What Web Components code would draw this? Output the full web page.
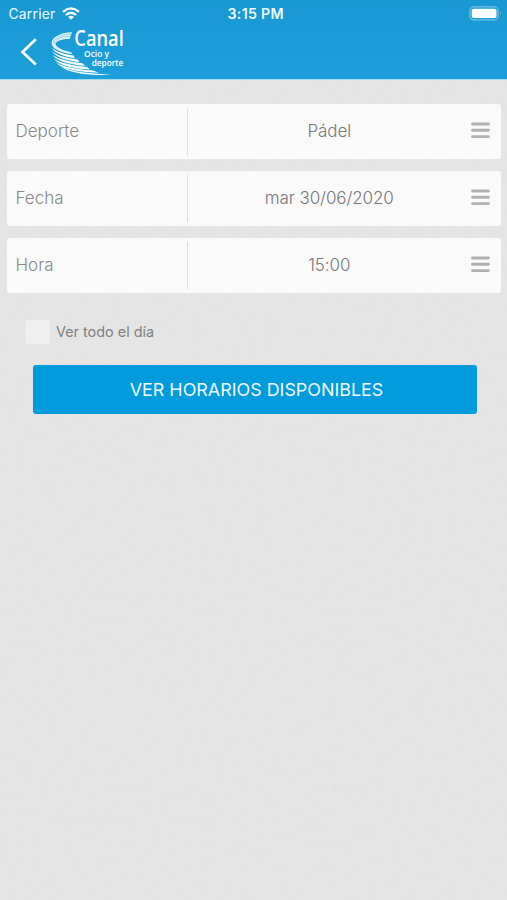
<!DOCTYPE html>
<html lang="es">
<head>
<meta charset="utf-8">
<meta name="viewport" content="width=device-width, initial-scale=1">
<title>Canal Ocio y deporte</title>
<style>
body {
    margin: 0;
    background: #e4e4e4;
    font-family: Inter, "Liberation Sans", sans-serif;
}
</style>
</head>
<body>
<canal-screen>
    <canal-header slot="header"></canal-header>
    <select-row label="Deporte">Pádel</select-row>
    <select-row label="Fecha">mar 30/06/2020</select-row>
    <select-row label="Hora">15:00</select-row>
    <check-option slot="actions">Ver todo el día</check-option>
    <primary-button slot="actions">VER HORARIOS DISPONIBLES</primary-button>
</canal-screen>

<script>
class CanalScreen extends HTMLElement {
    constructor() {
        super()
        this.attachShadow({ mode: "open" })
        this.shadowRoot.innerHTML = `
        <style>
        :host {
            position: relative;
            display: block;
            height: 900px;
            overflow: hidden;
            background: #e6e6e6;
        }
        .grain {
            position: absolute;
            inset: 0;
            width: 100%;
            height: 100%;
            opacity: 0.02;
        }
        .page {
            position: relative;
        }
        .rows {
            display: flex;
            flex-direction: column;
            gap: 12.4px;
            padding: 24px 6px 0 7px;
        }
        .actions {
            padding: 27.5px 30.5px 0 32.5px;
        }
        </style>
        <svg class="grain" aria-hidden="true">
            <filter id="paper">
                <feTurbulence type="fractalNoise" baseFrequency="0.12" numOctaves="3" seed="4"/>
                <feColorMatrix type="saturate" values="0"/>
                <feComponentTransfer><feFuncA type="linear" slope="0" intercept="1"/></feComponentTransfer>
            </filter>
            <rect width="100%" height="100%" filter="url(#paper)"/>
        </svg>
        <div class="page">
            <slot name="header"></slot>
            <div class="rows"><slot></slot></div>
            <div class="actions"><slot name="actions"></slot></div>
        </div>
        `
    }
}

class StatusBar extends HTMLElement {
    constructor() {
        super()
        this.attachShadow({ mode: "open" })
        this.shadowRoot.innerHTML = `
        <style>
        :host {
            display: grid;
            grid-template-columns: 1fr auto 1fr;
            align-items: center;
            height: 27px;
            padding: 0 5px 0 8.5px;
            color: #f0faff;
            font-size: 13.8px;
            line-height: 28px;
            letter-spacing: 0.25px;
        }
        .carrier {
            display: flex;
            align-items: center;
            gap: 6.5px;
        }
        .time {
            font-size: 14.2px;
            font-weight: 600;
            letter-spacing: 0.3px;
            margin-left: 1px;
        }
        .battery {
            justify-self: end;
            margin-top: -1px;
        }
        svg {
            display: block;
        }
        .wifi {
            margin-top: -2px;
        }
        </style>
        <div class="carrier">
            <span>Carrier</span>
            <svg class="wifi" width="18" height="13" viewBox="0 0 18 13" fill="none" stroke="#fff" stroke-width="2.3">
                <path d="M1 4.8Q9-2 17 4.8"/>
                <path d="M3.9 8Q9 3.6 14.1 8"/>
                <path d="M9 12.8L6.1 9.9Q9 7.7 11.9 9.9Z" fill="#fff" stroke="none"/>
            </svg>
        </div>
        <span class="time">3:15 PM</span>
        <svg class="battery" width="33" height="15" viewBox="0 0 33 15">
            <rect x="0.9" y="0.9" width="28.2" height="13" rx="4" fill="none" stroke="#fff" stroke-opacity="0.4" stroke-width="1.2"/>
            <rect x="2.7" y="2.8" width="24.8" height="9.2" rx="2" fill="#fff"/>
            <path d="M31 5.3Q32.6 7.4 31 9.5Z" fill="#fff" fill-opacity="0.5"/>
        </svg>
        `
    }
}

class CanalLogo extends HTMLElement {
    constructor() {
        super()
        this.attachShadow({ mode: "open" })
        this.shadowRoot.innerHTML = `
        <style>
        :host {
            display: block;
            width: 76px;
            height: 48px;
        }
        svg {
            display: block;
            overflow: visible;
        }
        text {
            font-family: "Open Sans", "Noto Sans", sans-serif;
            font-weight: 600;
            fill: #fff;
        }
        </style>
        <svg width="76" height="48" viewBox="50 28 76 48">
            <g fill="#fff">
                <path d="M72 32.3C62 32.4 51.5 37 51.6 43.2C51.8 49 61 52.5 72.2 54.2L71.5 52.4C63 50.2 55.8 47.2 55.5 44.2C55.5 41 63.5 38.4 69.5 39.2Z" fill-opacity="0.88"/>
                <path d="M51.9 47.5C54 52.8 63.5 56.6 75 58.3L73.5 55.6C64 54.2 55.5 51.7 51.9 47.5Z"/>
                <path d="M52.2 51.3C55 57 66 60.4 79.8 62.2L77.5 59.6C67 58 56.5 55.7 52.2 51.3Z"/>
                <path d="M52.7 54.9C56 60.6 68 64.1 85 65.9L82.5 63.3C71 61.6 58 59.4 52.7 54.9Z"/>
                <path d="M53.6 58.4C58 64.8 71 68 90 69.6L87 67C74 65.4 60 63.3 53.6 58.4Z"/>
                <path d="M56 62.4C61 68.2 74 71.4 99 72.8L93 70.5C79 69.4 64 67.4 56 62.4Z"/>
                <path d="M61 66.7C70 72.9 87 75.6 111 74.9C101 73.9 92 73.4 84 72.5C75 71.2 67 69.4 61 66.7Z"/>
            </g>
            <g fill="none" stroke="#1a9cd6" stroke-width="0.4">
                <path d="M71.4 34.2C63 34.2 53.8 37.5 53 43"/>
                <path d="M70.8 36.3C63 36 55.2 39 54.3 43.5"/>
            </g>
            <text x="74.3" y="46" font-size="21.5" textLength="49.5" lengthAdjust="spacingAndGlyphs">Canal</text>
            <text x="84" y="57" font-size="9.5" textLength="25" lengthAdjust="spacingAndGlyphs">Ocio y</text>
            <text x="91.7" y="65.6" font-size="9.5" textLength="31.5" lengthAdjust="spacingAndGlyphs">deporte</text>
        </svg>
        `
    }
}

class CanalHeader extends HTMLElement {
    constructor() {
        super()
        this.attachShadow({ mode: "open" })
        this.shadowRoot.innerHTML = `
        <style>
        :host {
            display: block;
            box-sizing: border-box;
            height: 80px;
            border-bottom: 1px solid #a8d9ee;
            background: linear-gradient(#1999d2, #1c9fda);
        }
        nav {
            display: flex;
            align-items: flex-start;
            gap: 12px;
            padding: 1px 0 0 20px;
        }
        .back {
            margin-top: 9px;
        }
        </style>
        <status-bar></status-bar>
        <nav>
            <svg class="back" width="18" height="30" viewBox="0 0 18 30" fill="none" stroke="#fff" stroke-width="2.7">
                <path d="M15.8 2.3L2.5 15L15.8 27.5"/>
            </svg>
            <canal-logo></canal-logo>
        </nav>
        `
    }
}

class SelectRow extends HTMLElement {
    constructor() {
        super()
        this.attachShadow({ mode: "open" })
        this.shadowRoot.innerHTML = `
        <style>
        :host {
            display: grid;
            grid-template-columns: 180px 1fr;
            box-sizing: border-box;
            height: 54.6px;
            padding: 4px 0;
            border-radius: 3px;
            background: #fafafa;
            font-size: 17px;
            line-height: 46px;
        }
        .label {
            padding-left: 8.5px;
            color: #888;
            font-weight: 350;
        }
        .field {
            display: grid;
            grid-template-columns: 1fr 19px;
            align-items: center;
            padding-right: 11.5px;
            border-left: 1px solid #dedede;
        }
        .value {
            text-align: center;
            color: #777;
            font-weight: 350;
            letter-spacing: -0.1px;
        }
        svg {
            display: block;
            margin-top: -1px;
        }
        </style>
        <div class="label"></div>
        <div class="field">
            <div class="value"><slot></slot></div>
            <svg width="19" height="17" viewBox="0 0 19 17" stroke="#b0b0b0" stroke-width="2.9" stroke-linecap="round">
                <path d="M1.5 2H17.5M1.5 8.3H17.5M1.5 14.6H17.5"/>
            </svg>
        </div>
        `
    }
    connectedCallback() {
        this.shadowRoot.querySelector(".label").textContent = this.getAttribute("label")
    }
}

class CheckOption extends HTMLElement {
    constructor() {
        super()
        this.attachShadow({ mode: "open" })
        this.shadowRoot.innerHTML = `
        <style>
        :host {
            display: flex;
            align-items: center;
            gap: 6px;
            height: 24px;
            margin-left: -7.5px;
            color: #808080;
            font-size: 14.4px;
            line-height: 22px;
        }
        .box {
            width: 25px;
            height: 24px;
            border-radius: 3px;
            background: #efefef;
        }
        </style>
        <span class="box" role="checkbox" aria-checked="false"></span>
        <span class="text"><slot></slot></span>
        `
        this.box = this.shadowRoot.querySelector(".box")
        this.addEventListener("click", () => {
            let checked = this.box.getAttribute("aria-checked") === "true"
            this.box.setAttribute("aria-checked", String(!checked))
            this.box.style.background = checked ? "#efefef" : "#009bdd"
        })
    }
}

class PrimaryButton extends HTMLElement {
    constructor() {
        super()
        this.attachShadow({ mode: "open" })
        this.shadowRoot.innerHTML = `
        <style>
        :host {
            display: block;
            margin-top: 20.5px;
        }
        button {
            display: block;
            width: 100%;
            height: 49px;
            padding: 0 0 0 4px;
            border: 0;
            border-radius: 3px;
            background: #009bdd;
            color: #f0faff;
            font: inherit;
            font-size: 17.9px;
            cursor: pointer;
        }
        </style>
        <button type="button"><slot></slot></button>
        `
    }
}

customElements.define("status-bar", StatusBar)
customElements.define("canal-logo", CanalLogo)
customElements.define("canal-header", CanalHeader)
customElements.define("select-row", SelectRow)
customElements.define("check-option", CheckOption)
customElements.define("primary-button", PrimaryButton)
customElements.define("canal-screen", CanalScreen)
</script>
</body>
</html>
